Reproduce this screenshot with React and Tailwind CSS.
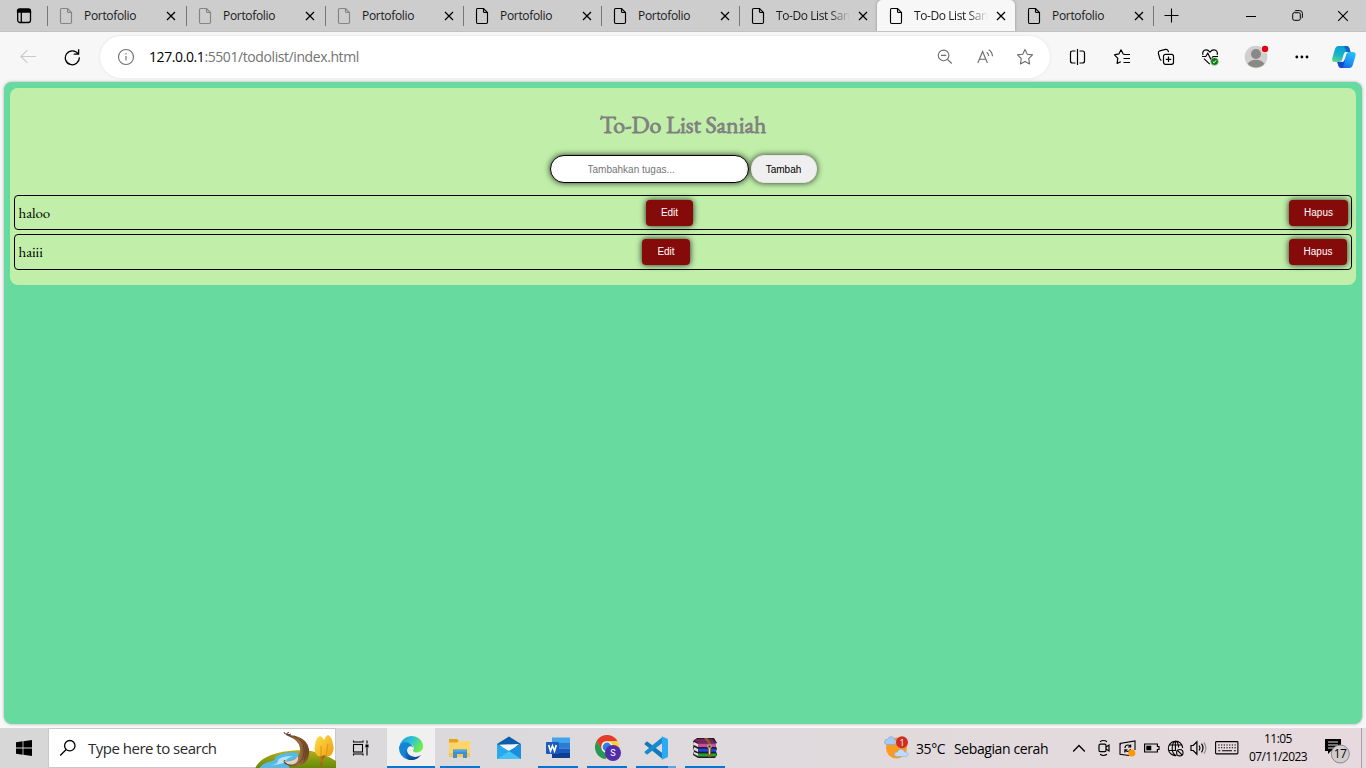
import React from "react";

const tabs = [
  { title: "Portofolio", dim: true, wide: true },
  { title: "Portofolio", dim: true, wide: true },
  { title: "Portofolio", dim: true },
  { title: "Portofolio" },
  { title: "Portofolio" },
  { title: "To-Do List Saniah", fade: true },
  { title: "To-Do List Saniah", fade: true, active: true },
  { title: "Portofolio" },
];

function Icon({ w = 16, h = 16, box, sw = 1, className = "", children }) {
  return (
    <svg
      width={w}
      height={h}
      viewBox={box || `0 0 ${w} ${h}`}
      fill="none"
      stroke="currentColor"
      strokeWidth={sw}
      className={`block shrink-0 ${className}`}
    >
      {children}
    </svg>
  );
}

function PageIcon({ dim }) {
  return (
    <Icon w={14} h={18} sw={1.15} className={dim ? "text-[#858585]" : "text-black"}>
      <path d="M2.6 1.5H8.500L12.500 5.500v9.800q0 1.200-1.200 1.200H2.700q-1.200 0-1.200-1.200V2.700q0-1.200 1.100-1.200Z" />
      <path d="M8.500 1.500V4.500q0 1 1 1h3" />
    </Icon>
  );
}

function Cross({ size = 10, sw = 1.3 }) {
  return (
    <Icon w={size} h={size} box="0 0 10 10" sw={sw}>
      <path d="m1 1 8 8M9 1 1 9" />
    </Icon>
  );
}

function Tab({ tab, prevActive }) {
  const { title, dim, fade, active, wide } = tab;
  return (
    <div
      className={`flex h-8 shrink-0 items-center ${wide ? "w-[139px]" : "w-[138px]"} ${
        active ? "rounded-t-[5px] bg-[#f7f7f7] shadow-[0_0_3px_rgba(0,0,0,0.3)]" : ""
      }`}
    >
      <div className={`h-5 w-px shrink-0 ${active || prevActive ? "bg-transparent" : "bg-[#777]"}`} />
      <div className="ml-[11px]"><PageIcon dim={dim} /></div>
      <div
        className={`ml-[11px] h-5 w-[74px] shrink-0 overflow-hidden whitespace-nowrap text-[12px] leading-5 text-[#1a1a1a] ${
          fade
            ? "tracking-[-0.42px] [mask-image:linear-gradient(to_right,black_72%,transparent_100%)]"
            : "tracking-[-0.32px]"
        }`}
      >
        {title}
      </div>
      <div className="ml-[8px]"><Cross /></div>
    </div>
  );
}

function TabStrip() {
  return (
    <div className="flex h-8 items-center overflow-hidden border-b border-[#c2c2c2] bg-[#cdcdcd]">
      <div className="flex w-[47px] shrink-0 justify-center">
        <Icon w={16} h={16} sw={1.3}>
          <rect x="1.700" y="1.700" width="12.800" height="12.800" rx="2.200" />
          <path d="M1.500 4V3q0-2 2-2h9q2 0 2 2v1Z" fill="currentColor" />
          <path d="M5.300 4v10" />
        </Icon>
      </div>
      {tabs.map((t, i) => (
        <Tab key={i} tab={t} prevActive={i > 0 && tabs[i - 1].active} />
      ))}
      <div className="h-5 w-px bg-[#777]" />
      <div className="ml-[10px]">
        <Icon w={15} h={15} sw={1.1}><path d="M7.500.500v14M.500 7.500h14" /></Icon>
      </div>
      <div className="flex flex-1 justify-end pr-[2px]">
        <div className="flex w-[46px] items-center justify-center pl-1"><Icon w={10} h={10}><path d="M0 5.500h10" /></Icon></div>
        <div className="flex w-[46px] items-center justify-center pl-1">
          <Icon w={11} h={11}>
            <rect x="0.700" y="2.700" width="7.600" height="7.600" rx="1.600" />
            <path d="M2.700 1.200Q3.200.600 4 .600h3.600q2.800 0 2.800 2.800V7q0 .800-.600 1.200" />
          </Icon>
        </div>
        <div className="flex w-[46px] items-center justify-center pl-1"><Cross size={12} sw={0.95} /></div>
      </div>
    </div>
  );
}

function Toolbar() {
  return (
    <div className="flex h-[50px] items-center bg-[#f7f7f7]">
      <div className="ml-5 text-[#c9c9c9]">
        <Icon w={16} h={16} sw={1.1}><path d="M16 7.500H1M7.500 1.200.800 7.500l6.700 6.300" /></Icon>
      </div>
      <div className="ml-7">
        <Icon w={16} h={18} sw={1.3}>
          <path d="M14.200 6A7 7 0 1 0 15.300 9.400M14.600 1.200v4.900H9.700" />
        </Icon>
      </div>
      <div className="ml-5 flex h-[42px] w-[950px] items-center rounded-full bg-white shadow-[0_0_3px_rgba(0,0,0,0.1)]">
        <div className="ml-[17px] text-[#6e6e6e]">
          <Icon w={18} h={18} sw={1.1}>
            <circle cx="9" cy="9" r="7.500" />
            <path d="M9 8v4.600M9 5v1.400" />
          </Icon>
        </div>
        <div className="ml-[14px] whitespace-nowrap text-[14px] leading-5 tracking-[-0.41px] text-[#737373]">
          <span className="text-black">127.0.0.1</span>:5501/todolist/index.html
        </div>
        <div className="ml-auto mr-4 flex items-center gap-[22px] text-[#6b6b6b]">
          <Icon w={18} h={18} sw={1.1}>
            <circle cx="7.600" cy="7.400" r="5.300" />
            <path d="m11.500 11.300 4.200 4.200M5 7.400h5.200" />
          </Icon>
          <Icon w={18} h={18} sw={1.1}>
            <path d="m1.800 15 4.800-11.500L11.400 15M3.500 11.200h6.200M10.700 4.200q1.800 1.300 2 3.800M12.700 1.800q3.400 2 3.800 6.400" />
          </Icon>
          <Icon w={18} h={18} sw={1.1}>
            <path d="m9 1.400 2.300 4.800 5.200.700-3.800 3.700.9 5.300L9 13.400l-4.600 2.500.9-5.300-3.800-3.700 5.200-.700Z" strokeLinejoin="round" />
          </Icon>
        </div>
      </div>
      <div className="ml-[18px]">
        <Icon w={18} h={18} sw={1.2}>
          <path d="M7.500 3H4.500Q2.500 3 2.500 5v8q0 2 2 2h3M11.500 3h3q2 0 2 2v8q0 2-2 2h-3M9.500 1v16" />
        </Icon>
      </div>
      <div className="ml-[27px]">
        <Icon w={18} h={18} sw={1.2}>
          <path d="M11.500 6.300 10.200 6 8 1.800 5.900 5.900 1.500 6.900l3.300 3.500-.700 5 3.700-1.700" strokeLinejoin="round" />
          <path d="M11 6.500h6M10.500 10.500h6.500M10.500 14.500h6.500" />
        </Icon>
      </div>
      <div className="ml-[26px]">
        <Icon w={18} h={18} sw={1.2}>
          <rect x="6.500" y="6.300" width="10" height="10" rx="2" />
          <path d="M11.500 8.600v5.400M8.800 11.300h5.400M4.400 12.400q-1.200-.3-1.600-1.700L1.400 5.300Q1 3.400 2.800 2.800L8.500 1.400q1.800-.4 2.600 1.300l.5 1.400" />
        </Icon>
      </div>
      <div className="ml-[26px]">
        <Icon w={18} h={18} sw={1.15}>
          <path d="M2 7C.9 4.200 2.600 1.900 5 1.900q2.300 0 4 2.200 1.700-2.200 4-2.200c2.600 0 4.200 2.600 3.100 5.100M3 10.700l5.700 5.500M1 8.500h3.800l2-3.300 3.200 6.300 2-3h5" />
          <circle cx="13.500" cy="13.500" r="4" fill="#107c10" stroke="#f7f7f7" strokeWidth=".6" />
          <path d="m11.800 13.700 1.200 1.100 2.100-2.500" stroke="white" strokeWidth="1" />
        </Icon>
      </div>
      <div className="ml-[25px]">
        <Icon w={26} h={26}>
          <g stroke="none">
            <circle cx="12" cy="13" r="11.300" fill="#d0cfcd" />
            <circle cx="12" cy="10" r="5" fill="#8a8886" />
            <path d="M3.600 19.700q3-4 8.400-4t8.400 4a11 11 0 0 1-16.800 0Z" fill="#8a8886" />
            <circle cx="21" cy="5" r="3.900" fill="#f7f7f7" />
            <circle cx="21" cy="5" r="3.200" fill="#e60012" />
          </g>
        </Icon>
      </div>
      <div className="ml-6">
        <Icon w={16} h={6}>
          <g fill="currentColor" stroke="none"><circle cx="2.800" cy="3" r="1.400" /><circle cx="7.900" cy="3" r="1.400" /><circle cx="13" cy="3" r="1.400" /></g>
        </Icon>
      </div>
      <div className="ml-[21px]">
        <Icon w={26} h={24}>
          <defs>
            <linearGradient id="cpa" x1="0.4" y1="0" x2="0.1" y2="1"><stop stopColor="#0d9ddb" /><stop offset=".5" stopColor="#16b3c8" /><stop offset="1" stopColor="#60d890" /></linearGradient>
            <linearGradient id="cpb" x1="0.8" y1="0" x2="0.2" y2="1"><stop stopColor="#26c1f5" /><stop offset=".6" stopColor="#1b8cf2" /><stop offset="1" stopColor="#1555d8" /></linearGradient>
          </defs>
          <g stroke="none">
            <path d="M7.500 1h8q2 0 2.800 2l1.200 4h-4q-2 0-2.700 2l-1.800 6q-.6 2-2.600 2H4Q.4 17 1.300 13L4 4q1-3 3.500-3Z" fill="url(#cpa)" />
            <path d="M17.700 7h3.800q3.900 0 3 4l-2.700 9q-1 3-3.500 3h-8q-2 0-2.800-2l-1.200-4h3q2.500 0 3.200-2l2.200-6q.7-2 3-2Z" fill="url(#cpb)" />
            <path d="M11.500 1h4q2 0 2.800 2l1.200 4h-3.800L14 3q-.8-2-2.500-2Z" fill="#1265c9" />
            <path d="m6.300 17 1.200 4q.8 2 2.800 2h1.600l2.100-8-1.600-.2Q11.600 17 9.300 17Z" fill="#1747ce" />
            <path d="M13.600 8q.5-1 2-1h1.800q-1.600.5-2 2l-2 6q-.7 2-2 2H9q2 0 2.500-2Z" fill="#f7f7f7" />
          </g>
        </Icon>
      </div>
    </div>
  );
}

const btn =
  "h-[26px] rounded-[4px] bg-[#850a0a] font-['Liberation_Sans',Arial,sans-serif] text-[10px] leading-[26px] text-white text-center shadow-[0_0_6px_rgba(0,0,0,0.85)]";

function Task({ name, tall, nameWidth, editWidth, hapusWidth }) {
  return (
    <div className={`flex items-center rounded-[4px] border border-black ${tall ? "h-9" : "h-[35px]"}`}>
      <div className={`pl-[3.5px] font-['EB_Garamond','Liberation_Serif',serif] text-[15px] leading-5 tracking-[-0.1px] text-black ${nameWidth}`}>
        {name}
      </div>
      <button className={`${btn} ${editWidth}`}>Edit</button>
      <button className={`${btn} ml-auto ${hapusWidth}`}>Hapus</button>
    </div>
  );
}

function TodoPage() {
  return (
    <div className="h-[646px] bg-[#f7f7f7] px-1 pb-1">
      <div className="h-[642px] rounded-lg bg-[#67da9f] p-1.5 shadow-[0_0_3px_rgba(0,0,0,0.35)]">
        <div className="flex h-[197px] flex-col rounded-lg bg-[#c1efaa] px-1">
          <h1 className="mt-[21px] text-center font-['EB_Garamond','Liberation_Serif',serif] text-[24px] font-normal leading-8 tracking-[-0.1px] text-[#808080] [-webkit-text-stroke:0.8px_#808080]">
            To-Do List Saniah
          </h1>
          <div className="mt-[14px] flex justify-center gap-[2px] font-['Liberation_Sans',Arial,sans-serif] text-[10px]">
            <input
              placeholder="Tambahkan tugas..."
              className="h-7 w-[199px] rounded-full border border-black bg-white pl-[37px] shadow-[0_0_6px_rgba(0,0,0,0.8)] outline-none placeholder:text-[#757575]"
            />
            <button className="h-7 w-[66px] rounded-[13px] border border-[#e6e6e6] bg-[#efefef] text-black shadow-[0_0_6px_rgba(0,0,0,0.8)]">
              Tambah
            </button>
          </div>
          <div className="mt-3 flex flex-col gap-1">
            <Task name="haloo" nameWidth="w-[631px]" editWidth="w-[47px]" hapusWidth="w-[59px] mr-[3px]" />
            <Task name="haiii" tall nameWidth="w-[627px]" editWidth="w-[48px]" hapusWidth="w-[58px] mr-[4px]" />
          </div>
        </div>
      </div>
    </div>
  );
}

function SearchArt() {
  return (
    <svg width="81" height="37" viewBox="0 0 81 37" className="block shrink-0">
      <defs>
        <linearGradient id="grass" x1="0" y1="0" x2="0" y2="1"><stop stopColor="#b9ad22" /><stop offset=".5" stopColor="#8b9a10" /><stop offset="1" stopColor="#5f8a06" /></linearGradient>
        <linearGradient id="trunk" x1="0" x2="1"><stop stopColor="#5c3a22" /><stop offset=".6" stopColor="#9d6c3d" /><stop offset="1" stopColor="#6c4424" /></linearGradient>
        <linearGradient id="leaf" x1="0" y1="0" x2="1" y2="1"><stop stopColor="#ffe04a" /><stop offset="1" stopColor="#ee9d11" /></linearGradient>
      </defs>
      <path d="M0 37Q3 28 16 23q12-4.500 32-5 17 1 33 11v8Z" fill="url(#grass)" />
      <path d="M4 37q3-6 13-8 4-1 3-4 6-4 18-5l11 3-17 7 3 7Z" fill="#58b9e4" />
      <path d="M14 34q10-2 9-6 3-4 15-4-9 3-6 6-6 2-18 4Z" fill="#b5e4f5" />
      <path d="M30 1.500q3-1 5 1.500 10 1 15 6 5 6 4 13-1 8-8 11-9 3-16-1-2-2-1-4 3 2 7 1 7-2 9-9 1-8-6-13-4-2-8-4Z" fill="url(#trunk)" />
      <path d="M29 29q5 1 9-1 3-1 5-4 1 6-4 8-6 2-10-3Z" fill="#d8d4cb" />
      <path d="m30 2-1-2m3 1.500 2-1.500m-1 3 3-1" stroke="#54404b" />
      <path d="M66 35q1-10-1-20m1 13 5-6" stroke="#a56615" strokeWidth="2" fill="none" />
      <path d="M60 13q1-8 5-9 4 2 4 5 1-5 4-6 4 2 5 9 2 8-3 12-4 1-6-1-3 2-6 1-5-4-3-11Z" fill="url(#leaf)" />
      <path d="M66 30V14m5 10 2-12" stroke="#d88812" strokeWidth=".8" fill="none" />
      <path d="M39 4q9 4 10 12 1 9-5 15M45 6q7 6 6 14l-2 8" stroke="#593820" fill="none" strokeWidth=".7" />
    </svg>
  );
}

function EdgeLogo() {
  return (
    <svg width="24" height="24" viewBox="0 0 24 24">
      <defs>
        <linearGradient id="ea" x1="0" y1="0" x2="1" y2=".5"><stop stopColor="#2390df" /><stop offset=".5" stopColor="#2bc3d5" /><stop offset="1" stopColor="#70ec4c" /></linearGradient>
        <linearGradient id="eb" x1="0" y1="0" x2=".5" y2="1"><stop stopColor="#1b8fdb" /><stop offset="1" stopColor="#0b4593" /></linearGradient>
      </defs>
      <path d="M.6 10.500A12 12 0 0 1 12 0c7 0 12 4.700 12 10.300 0 4-3 6.200-6.300 6.200-3 0-4-1-3.500-2.200 2-3.800-1-6.500-4.700-6.500C5 7.500 1.600 9 .6 10.500Z" fill="url(#ea)" />
      <path d="M0 12c.4-4 4-6.500 8.200-5.600 3.300.7 6.100 3.100 6 5.600-.3-1.200-2-2-3.700-1.500C6.500 12 7 20 16 21q4 .2 6-2.300A12 12 0 0 1 0 12Z" fill="#1485d6" />
      <path d="M10.500 10.500C4.500 13.500 9 22 17 21q3.500-.5 5-2.300A12 12 0 0 1 10 23.800C4.500 21 4.300 12 10.500 10.500Z" fill="url(#eb)" />
    </svg>
  );
}

function ExplorerLogo() {
  return (
    <svg width="24" height="24" viewBox="0 0 24 24">
      <path d="M1 3h8l2 2h-1v4H1Z" fill="#e5a514" />
      <path d="M1 6.500h8L11.500 5H22v16H1Z" fill="#ffd567" />
      <path d="M1 17h21v4H1Z" fill="#f8c64f" />
      <path d="M5 13.500h14V22h-4v-4H9v4H5Z" fill="#3b91d8" />
      <path d="M7 13.500h10l2 2H5Z" fill="#58acdf" />
    </svg>
  );
}

function MailLogo() {
  return (
    <svg width="24" height="24" viewBox="0 0 24 24">
      <path d="M0 8 12 .5 24 8v3H0Z" fill="#0b5ead" />
      <path d="m2 8.700 20-.7-10 8Z" fill="#f5f7f9" />
      <path d="M0 8v15h24V8l-12 7Z" fill="#27a9eb" />
      <path d="M0 23 24 8v15Z" fill="#43c3f5" />
      <path d="m12 15 12 8V8Z" fill="#1a8ddd" />
    </svg>
  );
}

function WordLogo() {
  return (
    <svg width="24" height="24" viewBox="0 0 24 24">
      <path d="M6 1.500h18V7H6Z" fill="#41a5ee" /><path d="M6 7h18v5.500H6Z" fill="#2b7cd3" />
      <path d="M6 12.500h18V17H6Z" fill="#185abd" /><path d="M6 17h18v5H6Z" fill="#103f91" />
      <rect y="6" width="13" height="12" rx="1" fill="#1c5bbd" />
      <path d="m2.700 9 1.800 6 2-5.300 2 5.300 1.800-6" stroke="#fff" strokeWidth="1.600" fill="none" />
    </svg>
  );
}

function ChromeLogo() {
  return (
    <svg width="26" height="26" viewBox="0 0 26 26" className="ml-[2px]">
      <circle cx="12" cy="12" r="12" fill="#ffcd40" />
      <path d="M1.600 6A12 12 0 0 1 22.400 6H12Q8 6 6.800 9v6Z" fill="#e33b2e" />
      <path d="M1.600 6 7 15q2 3.500 7 3.200L10.500 24A12 12 0 0 1 1.600 6Z" fill="#239a55" />
      <circle cx="12" cy="12" r="5.600" fill="white" /><circle cx="12" cy="12" r="4.400" fill="#317ce5" />
      <circle cx="18" cy="18" r="8" fill="#512da8" />
      <text x="18" y="21.200" textAnchor="middle" fill="white" fontFamily="Roboto, sans-serif" fontSize="9">S</text>
    </svg>
  );
}

function CodeLogo() {
  return (
    <svg width="24" height="24" viewBox="0 0 24 24">
      <path d="m.8 7.200 1.600-1.400q.6-.4 1.200 0L19 17.500v6L.8 8.500Q.2 7.800.8 7.200Z" fill="#1479bc" />
      <path d="m.8 16.800 1.600 1.400q.6.400 1.200 0L19 6.500v-6L.8 15.500q-.6.700 0 1.300Z" fill="#168bd0" />
      <path d="m17.600.2 5.400 2.300q1 .5 1 1.500v16q0 1-1 1.500l-5.400 2.300q.4-.3.400-1.200V1.500q0-1-.4-1.300Z" fill="#2baaf2" />
    </svg>
  );
}

function RarLogo() {
  return (
    <svg width="26" height="24" viewBox="0 0 26 24">
      <path d="M1 5 5 2h17l3 5-2 1 2 5-1 2 1 4-2 3H6l-5-3 1-4-1-4 1-3Z" fill="#221c2b" />
      <path d="M2 4 5 3h15l4 4H6Z" fill="#7f205f" />
      <path d="M6 7.500h18v3.500H6Z" fill="#ca4c9f" /><path d="M6 12.700h18v3H6Z" fill="#2146df" /><path d="M6 17.500h18v3H6Z" fill="#21a630" />
      <path d="m2 6 4 2v3L2 9Zm0 5 4 2v3l-4-2Zm0 5 4 1.500V20l-4-2Z" fill="#e4dfd4" />
      <path d="m12 2 4 5v14h3V7l-3.500-5Z" fill="#8b5d2d" />
      <path d="M16 9h3v3h-3Z" fill="#3a3128" stroke="#d5c8a8" strokeWidth=".8" /><path d="M17.500 12.500v6" stroke="#ece2c6" />
    </svg>
  );
}

const apps = [
  { Logo: EdgeLogo, line: "w-12", active: true },
  { Logo: ExplorerLogo, line: "w-10" },
  { Logo: MailLogo, line: "w-0" },
  { Logo: WordLogo, line: "w-10" },
  { Logo: ChromeLogo, line: "w-10" },
  { Logo: CodeLogo, line: "w-10", split: true },
  { Logo: RarLogo, line: "w-10" },
];

function Taskbar() {
  return (
    <div className="flex h-10 items-center bg-linear-to-r from-[#d7d7d8] via-[#dedadd] to-[#e7dade] text-black">
      <div className="flex w-12 shrink-0 justify-center">
        <svg width="16" height="16" viewBox="0 0 16 16"><path d="M0 2.300 6.600 1.300v6.300H0Zm7.400-1.100L16 0v7.600H7.400ZM0 8.400h6.600v6.400L0 13.800Zm7.400 0H16V16l-8.600-1.200Z" /></svg>
      </div>
      <div className="flex h-10 w-[288px] shrink-0 items-center border border-[#c8c8c8] bg-white">
        <div className="ml-[10px]">
          <Icon w={18} h={18} sw={1.3}><circle cx="10.800" cy="6.700" r="5.200" /><path d="m7.200 10.500-6 6" /></Icon>
        </div>
        <div className="ml-[11px] flex-1 whitespace-nowrap text-[15px] leading-5 tracking-[-0.5px] text-[#2b2b2b]">Type here to search</div>
        <div className="-mr-px mt-1"><SearchArt /></div>
      </div>
      <div className="flex w-[51px] shrink-0 justify-center pr-[3px]">
        <Icon w={17} h={16} sw={1.1}>
          <rect x="1.500" y="4.500" width="9" height="7.500" /><path d="M1.500.5v1.500h9.500V.5M1.500 15.500v-1.500h9.500v1.500M15 .5v3M15 8v7.500" />
          <path d="M13.500 4.500h3v3h-3Z" fill="currentColor" stroke="none" />
        </Icon>
      </div>
      <div className="flex gap-px">
        {apps.map(({ Logo, line, active, split }, i) => (
          <div key={i} className={`flex h-10 w-12 flex-col items-center ${active ? "bg-[#f0f0f1]" : ""}`}>
            <div className="flex h-[38px] items-center pt-[2px]"><Logo /></div>
            <div className={`flex h-0.5 bg-[#0078d7] ${line}`}>{split && <div className="ml-auto h-0.5 w-2 bg-[#5ca6df]" />}</div>
          </div>
        ))}
      </div>
      <div className="ml-[155px] shrink-0">
        <svg width="25" height="25" viewBox="0 0 25 25" className="block">
          <circle cx="12.500" cy="12" r="10.500" fill="#f89b20" />
          <path d="M3 8.500q-3 0-2.500-3Q1 3 3.500 3.300 5-.5 8.500 1q2 .7 2 2.500Q13 4 12.500 6.500q-.5 2-2.500 2Z" fill="#a7c8f5" stroke="#7da5df" strokeWidth=".6" />
          <path d="M12.500 20.500q-2.500-.5-2-2.700.5-2 3-1.800 1-3.500 4.500-2.500 2 .5 2.500 2.500 4 0 3.500 2.500-.3 2-2.500 2Z" fill="#c1dafb" stroke="#88afdf" strokeWidth=".6" />
          <circle cx="18" cy="6.300" r="6" fill="#cf2e25" /><text x="18" y="9.500" textAnchor="middle" fill="white" fontFamily="Open Sans, sans-serif" fontSize="9">1</text>
        </svg>
      </div>
      <div className="ml-[7px] w-[38px] whitespace-nowrap text-[14px] tracking-[-0.4px]">35°C</div>
      <div className="w-[96px] whitespace-nowrap text-[14px] tracking-[-0.4px]">Sebagian cerah</div>
      <div className="ml-[22px] flex shrink-0 items-center">
        <Icon w={14} h={9} sw={1.3}><path d="m1.200 7.500 5.800-6 5.800 6" /></Icon>
        <Icon w={14} h={18} sw={1.2} className="ml-[11px]">
          <rect x="2" y="5.200" width="7" height="7.500" rx="1.200" /><path d="m9 8 3-2v6l-3-2M3 2.700q3.500-2.400 7 0M3 15.300q3.500 2.400 7 0" />
        </Icon>
        <Icon w={17} h={17} sw={1.1} className="ml-[8px]">
          <path d="M10 15.500 1 14.300V3.500L16 1v9M1 5l1-2M6 8q0-3 3-3 2 0 2.500 2M11.700 4.500V7H9M11.500 9q-.5 2.500-3 2.500Q6.500 11.500 6 9.800M5.800 12.400V9.900h2.600" />
          <circle cx="12.800" cy="13" r="3.600" fill="#ff9800" stroke="none" />
        </Icon>
        <Icon w={16} h={10} sw={1.2} className="ml-[8px]"><path d="M.6 1h12.800v2.500H15v3h-1.600V9H.6Z" /><path d="M2.300 2.700h5v4.600h-5Z" fill="currentColor" stroke="none" /></Icon>
        <Icon w={17} h={17} sw={1.1} className="ml-[7px]">
          <path d="M9.500 15.500A7.200 7.200 0 1 1 15.700 8M9 15.500Q5.200 14 5.200 8.300T8.400 1.100Q11.500 2.500 11.600 7.500M2 5h12.800M1.200 10.500h8M8.400 1v9" />
          <circle cx="12.800" cy="12.700" r="3.200" /><path d="m10.600 10.500 4.400 4.400" />
        </Icon>
        <Icon w={18} h={16} sw={1.2} className="ml-[6px]">
          <path d="M1 5.500h2.200l3.700-3.700v12.400l-3.700-3.700H1ZM9.200 5.500q1.600 2.500 0 5M11.500 3.700q3 4.300 0 8.600" /><path d="M13.900 2.300q4 5.700 0 11.400" stroke="#948c8f" />
        </Icon>
        <Icon w={24} h={14} sw={1.1} className="ml-[7px]">
          <rect x=".6" y=".6" width="22.300" height="12.300" rx=".8" /><path d="M3.300 4h17.500M3.300 6.800h17.500" strokeDasharray="1.300 1.400" /><path d="M3.300 9.800h2M7 9.800h10M18.800 9.800h2" />
        </Icon>
      </div>
      <div className="ml-[9px] flex w-[60px] flex-col items-center whitespace-nowrap text-[12px] leading-[18px] tracking-[-0.55px]">
        <span>11:05</span>
        <span>07/11/2023</span>
      </div>
      <div className="ml-[16px] mt-[5px]">
        <svg width="27" height="27" viewBox="0 0 27 27" className="block">
          <path d="M1 2h16v12H7l-3 3v-3H1Z" /><path d="M4 5h10M4 8h10M4 11h7" stroke="#e6dade" />
          <circle cx="16.300" cy="17" r="9" fill="#d2cccf" stroke="#8a8587" />
          <text x="16" y="21.300" textAnchor="middle" fontFamily="Open Sans, sans-serif" fontSize="12" letterSpacing="-.5">17</text>
        </svg>
      </div>
      <div className="ml-auto mr-1 h-10 w-px bg-[#aaa1a4]" />
    </div>
  );
}

export default function App() {
  return (
    <div className="h-[768px] w-[1366px] overflow-hidden bg-[#f7f7f7] font-['Segoe_UI','Open_Sans',sans-serif] text-black">
      <TabStrip />
      <Toolbar />
      <TodoPage />
      <Taskbar />
    </div>
  );
}
